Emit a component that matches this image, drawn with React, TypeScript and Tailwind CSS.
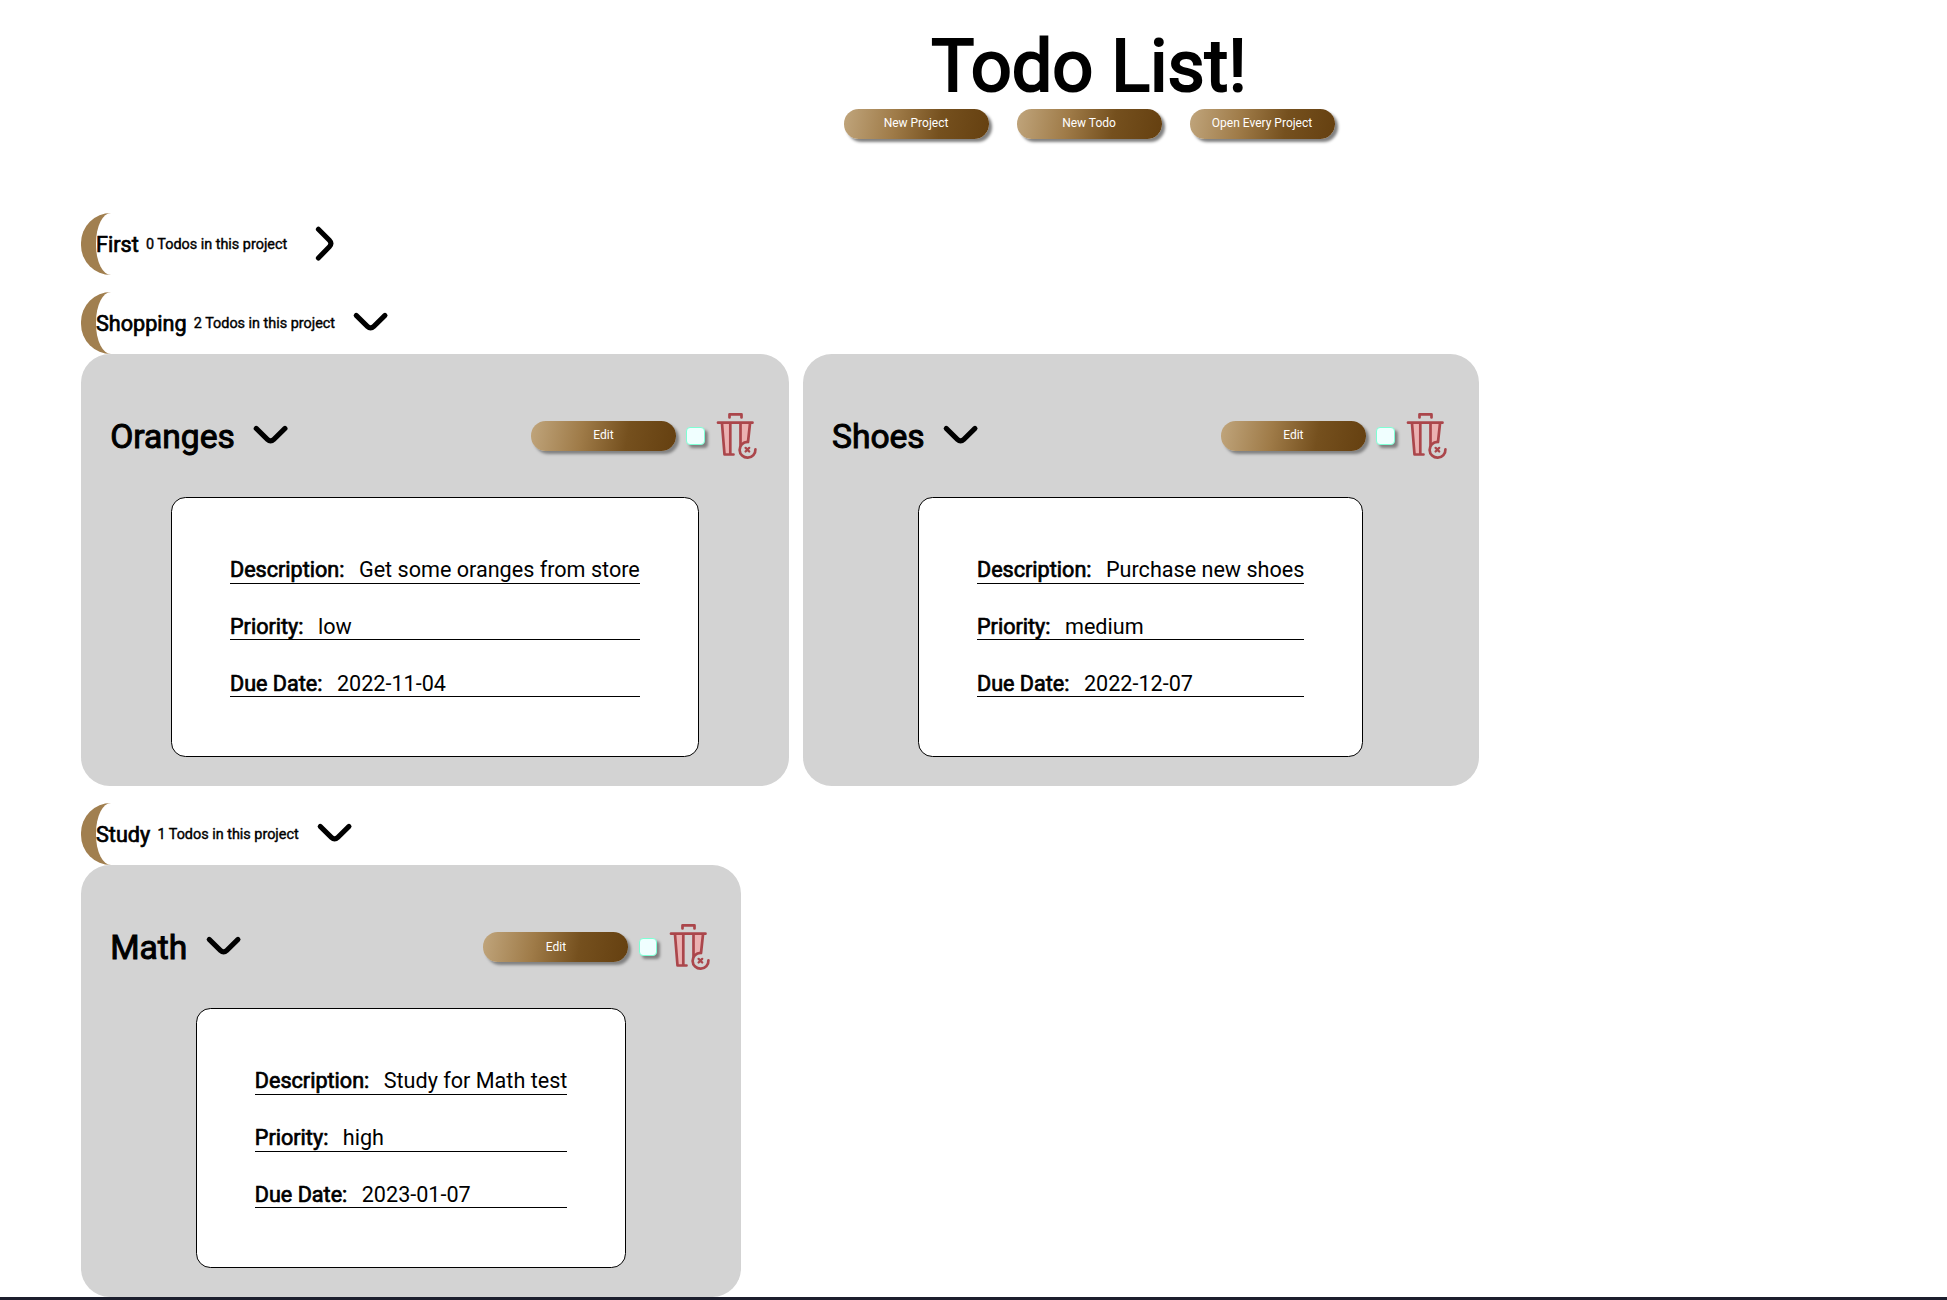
const boldLight = "[-webkit-text-stroke:0.7px_black]";

function Chevron({ right = false }: { right?: boolean }) {
  return (
    <svg viewBox="0 0 24 24" className={`size-[43.2px] shrink-0 ${right ? "translate-x-[2px] -rotate-90" : ""}`} fill="none" stroke="black" strokeWidth="2.8" strokeLinecap="round" strokeLinejoin="round">
      <path d="M4 8 L10.2 14.1 Q12 15.8 13.8 14.1 L20 8" />
    </svg>
  );
}

function Trash() {
  return (
    <svg viewBox="0 0 40 46" className="mr-[2.5px] h-[46px] w-[40px] shrink-0 overflow-visible" fill="none" stroke="#ab464b" strokeWidth="2.7" strokeLinecap="round" strokeLinejoin="round">
      <path d="M5 10.500 L13.500 10.500 V41 H7.500Z M23.500 10.500 H33.500 L31 29 Q26 30 23.500 33Z" fill="#ebb1b1" stroke="none" />
      <path d="M12.500 4.500 V1.400 H24.500 V4.500" />
      <path d="M1 9.700 H35.500" />
      <path d="M5 10.500 L7.500 41.500 H16.500 M13.300 10.500 V41 M23.500 10.500 V32 M33 10.500 L31 29" />
      <path d="M30.500 28.900 A7.900 7.900 0 1 0 38.400 36.300" />
      <path d="M28.600 34.900 L32.200 38.500 M32.200 34.900 L28.600 38.500" strokeWidth="2.3" />
    </svg>
  );
}

function Button({ children }: { children: string }) {
  return (
    <button className="h-[29.500px] w-[145px] shrink-0 rounded-[14.75px] bg-[linear-gradient(100deg,#c0a57c_0%,#9f7b48_35%,#75501e_66%,#654010_100%)] pb-px text-[12px] leading-none text-white shadow-[3px_3px_3px_gray]">
      {children}
    </button>
  );
}

function Project({ name, count, closed = false }: { name: string; count: number; closed?: boolean }) {
  return (
    <div className="flex h-[61.9px] items-center rounded-[30px] border-l-[15px] border-[#a17f4f]">
      <h2 className={`pt-[2px] text-[21.6px] ${boldLight}`}>{name}</h2>
      <h3 className="ml-[7.2px] mr-[14.4px] pt-[1px] text-[14.4px] [-webkit-text-stroke:0.4px_black]">{count} Todos in this project</h3>
      <Chevron right={closed} />
    </div>
  );
}

function Row({ label, value }: { label: string; value: string }) {
  return (
    <div className="flex h-[27.6px] gap-[14.4px] border-b border-black text-[21.6px] leading-[28px]">
      <span className={boldLight}>{label}</span>
      <span>{value}</span>
    </div>
  );
}

type Todo = { title: string; description: string; priority: string; due: string };

function Card({ title, description, priority, due }: Todo) {
  return (
    <div className="flex h-[432px] flex-col items-center rounded-[28.8px] bg-[#d3d3d3] px-[28.8px] pb-[28.8px] pt-[53px]">
      <div className="flex h-[58px] w-full items-center">
        <h2 className="mr-[14.4px] pl-[0.4px] pt-[1px] text-[33.6px] leading-none [-webkit-text-stroke:1px_black]">{title}</h2>
        <Chevron />
        <div className="ml-[238.6px] flex items-center">
          <Button>Edit</Button>
          <span className="ml-[10.4px] mr-[12.6px] size-[18.500px] rounded-[4px] border border-[#7fffd4] bg-[#f0ffff] shadow-[3px_3px_3px_gray]" />
          <Trash />
        </div>
      </div>
      <div className="mt-auto flex h-[260px] flex-col gap-[29.2px] rounded-[14.4px] border border-black bg-white px-[57.8px] pt-[58px]">
        <Row label="Description:" value={description} />
        <Row label="Priority:" value={priority} />
        <Row label="Due Date:" value={due} />
      </div>
    </div>
  );
}

export default function App() {
  return (
    <div className="flex h-[1300px] flex-col overflow-hidden bg-white font-['Roboto',sans-serif] text-black">
      <header className="flex h-[213px] flex-col items-center pl-[231px] pt-[25px]">
        <h1 className="h-[84px] text-[72px] leading-[84px] [-webkit-text-stroke:2.200px_black]">Todo List!</h1>
        <div className="flex gap-[28px]">
          <Button>New Project</Button>
          <Button>New Todo</Button>
          <Button>Open Every Project</Button>
        </div>
      </header>
      <main className="flex h-[1084px] flex-col items-start gap-[17.28px] pl-[81px]">
        <Project name="First" count={0} closed />
        <section className="flex flex-col items-start">
          <Project name="Shopping" count={2} />
          <div className="flex gap-[14px]">
            <Card title="Oranges" description="Get some oranges from store" priority="low" due="2022-11-04" />
            <Card title="Shoes" description="Purchase new shoes" priority="medium" due="2022-12-07" />
          </div>
        </section>
        <section className="flex flex-col items-start">
          <Project name="Study" count={1} />
          <Card title="Math" description="Study for Math test" priority="high" due="2023-01-07" />
        </section>
      </main>
      <footer className="h-[3px] shrink-0 bg-[#1c1e2d]" />
    </div>
  );
}
